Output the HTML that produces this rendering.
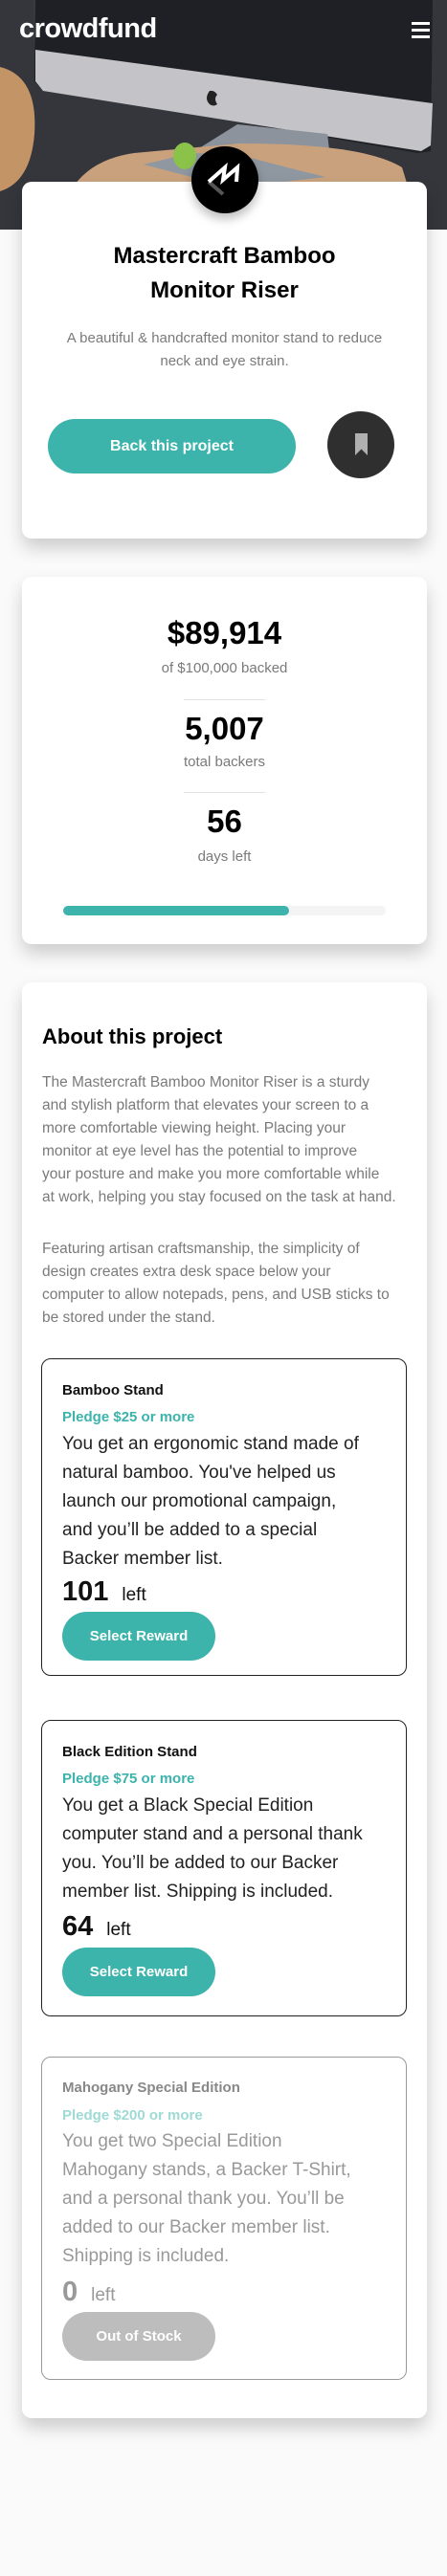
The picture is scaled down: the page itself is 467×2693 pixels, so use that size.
<!DOCTYPE html>
<html><head><meta charset="utf-8">
<style>
*{margin:0;padding:0;box-sizing:border-box}
body{width:467px;height:2693px;background:#fafafa;font-family:"Liberation Sans",sans-serif;position:relative;overflow:hidden}
.abs{position:absolute}
.card{position:absolute;left:23px;width:423px;background:#fff;border-radius:10px;box-shadow:0 10px 18px rgba(0,0,0,0.18)}
.c{position:absolute;left:0;width:100%;text-align:center}
.gray{color:#7a7a7a}
.box{position:absolute;left:43px;width:382px;border:1.5px solid #222;border-radius:10px}
.box .t{position:absolute;left:21px;font-size:15px;font-weight:bold;color:#111}
.box .p{position:absolute;left:21px;font-size:15px;font-weight:bold;color:#3cb3ab}
.box .d{position:absolute;left:21px;font-size:19px;line-height:30px;color:#222;white-space:nowrap}
.box .n{position:absolute;left:21px;font-size:29px;font-weight:bold;color:#111}
.box .n span{font-size:19px;font-weight:normal;margin-left:14px}
.box .b{position:absolute;left:21px;width:160px;height:51px;border-radius:26px;background:#3cb3ab;color:#fff;font-weight:bold;font-size:15px;text-align:center;line-height:51px}
</style></head><body>
<div class="abs" style="left:0;top:0;width:467px;height:240px;overflow:hidden;background:#2f3137">
<svg width="467" height="240" viewBox="0 0 467 240" style="position:absolute;left:0;top:0">
<rect x="0" y="0" width="467" height="240" fill="#34363c"/>
<rect x="35" y="0" width="210" height="45" fill="#3a3b40"/>
<polygon points="37,0 452,0 450,158 437,160 42,92 36,85" fill="#1f2025"/>
<polygon points="37,52 452,108 450,152 440,158 45,95 37,85" fill="#c4c4c8"/>
<path d="M219,95 q-6,8 0,14 q4,3 8,0 q-4,-6 0,-10 q-3,-5 -8,-4z" fill="#222"/>
<polygon points="248,130 342,140 345,165 330,185 200,180 150,170 200,160" fill="#8d939c"/>
<path d="M60,240 Q70,170 140,160 L250,150 Q380,150 420,175 L440,240z" fill="#c9a27d"/>
<path d="M0,70 Q40,80 36,140 Q32,190 0,200z" fill="#c39466"/>
<polygon points="150,172 200,160 250,162 300,175 340,185 280,192 200,185" fill="#8f97a1"/>
<ellipse cx="193" cy="163" rx="12" ry="14" fill="#8bc34a"/>
</svg>
<div class="abs" style="left:20px;top:14px;font-size:29px;font-weight:bold;color:#fff;letter-spacing:-0.5px">crowdfund</div>
<div class="abs" style="left:430px;top:23px;width:19px;height:3px;background:#fff;box-shadow:0 7px 0 #fff,0 14px 0 #fff"></div>
</div>

<div class="card" style="top:190px;height:373px">
<div class="c" style="top:60px;font-size:24px;font-weight:bold;line-height:36px;color:#000">Mastercraft Bamboo<br>Monitor Riser</div>
<div class="c gray" style="top:152px;font-size:15px;line-height:24px">A beautiful &amp; handcrafted monitor stand to reduce<br>neck and eye strain.</div>
<div class="abs" style="left:27px;top:248px;width:259px;height:57px;border-radius:29px;background:#3cb3ab;color:#fff;font-weight:bold;font-size:16px;text-align:center;line-height:57px">Back this project</div>
<div class="abs" style="left:319px;top:240px;width:70px;height:70px;border-radius:50%;background:#2f2f2f">
<div class="abs" style="left:29px;top:23px;width:13px;height:23px;background:#b0b0b0;clip-path:polygon(0 0,100% 0,100% 100%,50% 72%,0 100%)"></div>
</div>
</div>
<div class="abs" style="left:200px;top:153px;width:70px;height:70px;border-radius:50%;background:#000;box-shadow:0 6px 10px rgba(0,0,0,0.25)">
<svg width="70" height="70" viewBox="0 0 70 70"><polyline points="18,37 33,50" stroke="#555" stroke-width="4" fill="none"/><polyline points="18,37 35,22 33,35 48,22 47,37" stroke="#fff" stroke-width="4" fill="none" stroke-linejoin="miter"/></svg>
</div>

<div class="card" style="top:603px;height:384px">
<div class="c" style="top:40px;font-size:33px;font-weight:bold;color:#000">$89,914</div>
<div class="c gray" style="top:87px;font-size:15px">of $100,000 backed</div>
<div class="abs" style="left:169px;top:128px;width:85px;height:1px;background:#e3e3e3"></div>
<div class="c" style="top:140px;font-size:33px;font-weight:bold;color:#000">5,007</div>
<div class="c gray" style="top:185px;font-size:15px">total backers</div>
<div class="abs" style="left:169px;top:225px;width:85px;height:1px;background:#e3e3e3"></div>
<div class="c" style="top:237px;font-size:33px;font-weight:bold;color:#000">56</div>
<div class="c gray" style="top:284px;font-size:15px">days left</div>
<div class="abs" style="left:43px;top:344px;width:337px;height:10px;border-radius:5px;background:#f4f4f4"><div style="width:236px;height:10px;border-radius:5px;background:#3cb3ab"></div></div>
</div>

<div class="card" style="top:1027px;height:1501px"></div>
<div class="abs" style="left:44px;top:1071px;font-size:22px;font-weight:bold;color:#000">About this project</div>
<div class="abs gray" style="left:44px;top:1120px;font-size:15.5px;line-height:24px;white-space:nowrap">The Mastercraft Bamboo Monitor Riser is a sturdy<br>and stylish platform that elevates your screen to a<br>more comfortable viewing height. Placing your<br>monitor at eye level has the potential to improve<br>your posture and make you more comfortable while<br>at work, helping you stay focused on the task at hand.</div>
<div class="abs gray" style="left:44px;top:1294px;font-size:15.5px;line-height:24px;white-space:nowrap">Featuring artisan craftsmanship, the simplicity of<br>design creates extra desk space below your<br>computer to allow notepads, pens, and USB sticks to<br>be stored under the stand.</div>

<div class="box" style="top:1420px;height:332px">
<div class="t" style="top:24px">Bamboo Stand</div>
<div class="p" style="top:52px">Pledge $25 or more</div>
<div class="d" style="top:74px">You get an ergonomic stand made of<br>natural bamboo. You've helped us<br>launch our promotional campaign,<br>and you’ll be added to a special<br>Backer member list.</div>
<div class="n" style="top:227px">101<span>left</span></div>
<div class="b" style="top:264px">Select Reward</div>
</div>

<div class="box" style="top:1798px;height:310px">
<div class="t" style="top:24px">Black Edition Stand</div>
<div class="p" style="top:52px">Pledge $75 or more</div>
<div class="d" style="top:74px">You get a Black Special Edition<br>computer stand and a personal thank<br>you. You’ll be added to our Backer<br>member list. Shipping is included.</div>
<div class="n" style="top:199px">64<span>left</span></div>
<div class="b" style="top:237px">Select Reward</div>
</div>

<div class="box" style="top:2150px;height:338px;border-color:#999;opacity:1">
<div class="t" style="top:23px;color:#888">Mahogany Special Edition</div>
<div class="p" style="top:52px;color:#9fdad5">Pledge $200 or more</div>
<div class="d" style="top:73px;color:#999">You get two Special Edition<br>Mahogany stands, a Backer T-Shirt,<br>and a personal thank you. You’ll be<br>added to our Backer member list.<br>Shipping is included.</div>
<div class="n" style="top:229px;color:#999">0<span>left</span></div>
<div class="b" style="top:266px;background:#bdbdbd">Out of Stock</div>
</div>
</body></html>
